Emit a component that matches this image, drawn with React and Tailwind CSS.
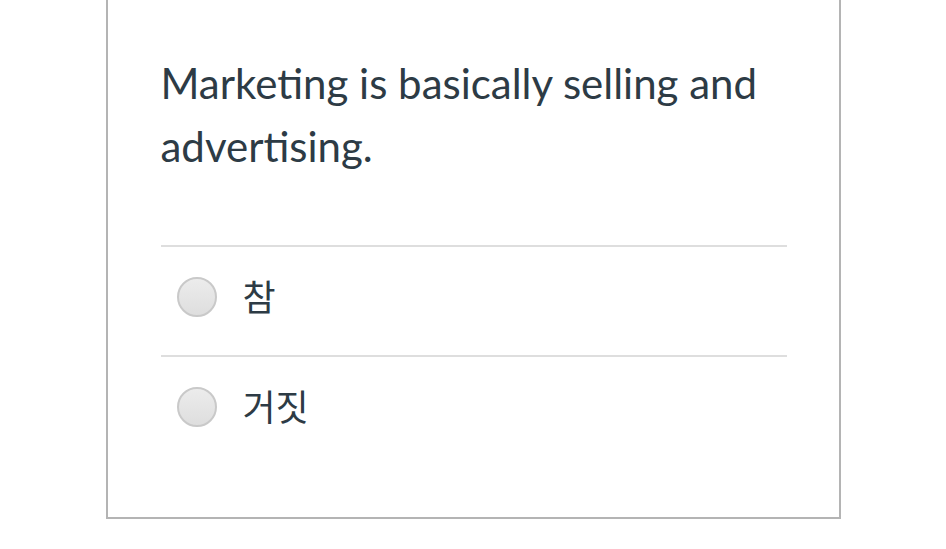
const answers = ["참", "거짓"];

function Radio() {
  return (
    <span className="block w-[40px] h-[40px] shrink-0 rounded-full border-2 border-[#c9c9c9] bg-gradient-to-b from-[#ececec] to-[#dedede]" />
  );
}

export default function App() {
  return (
    <div className="w-[946px] h-[549px] bg-white overflow-hidden font-['Lato','Noto_Sans_CJK_KR',sans-serif] text-[#2d3b45]">
      <div className="mx-auto w-[735px] border-x-2 border-b-2 border-[#b4b4b4] pt-[52px] pb-[52px] pl-[53px] pr-[52px]">
        {/* Question */}
        <p className="text-[42px] leading-[63px] pr-[20px]">
          Marketing is basically selling and advertising.
        </p>

        {/* Answers */}
        <div className="mt-[67px]">
          {answers.map((a) => (
            <label
              key={a}
              className="flex items-center gap-[26px] border-t-2 border-[#dedede] pt-[30px] pb-[38px] pl-[16px]"
            >
              <Radio />
              <span className="text-[36px] leading-[40px]">{a}</span>
            </label>
          ))}
        </div>
      </div>
    </div>
  );
}
